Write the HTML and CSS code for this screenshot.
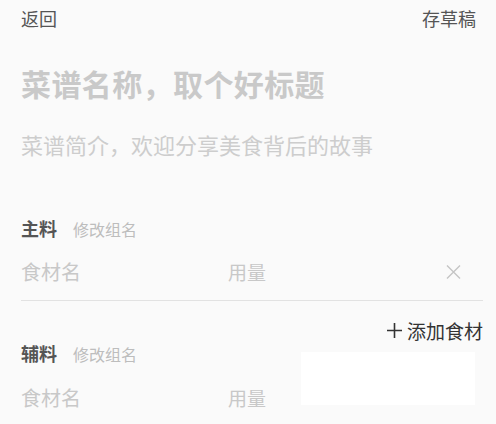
FILE: index.html
```html
<!DOCTYPE html>
<html lang="zh-CN">
<head>
  <meta charset="UTF-8" />
  <meta name="viewport" content="width=device-width, initial-scale=1.0"/>
  <title>创建菜谱</title>
  <link rel="stylesheet" href="styles.css">
</head>
<body>

  <!-- 顶部栏 -->
  <div class="topbar">
    <span>返回</span>
    <span>存草稿</span>
  </div>

  <div class="title">菜谱名称，取个好标题</div>
  <div class="intro">菜谱简介，欢迎分享美食背后的故事</div>

  <!-- 主料 -->
  <div class="group group-main">
    <div class="group-head">
      <span class="group-name">主料</span>
      <span class="group-edit">修改组名</span>
    </div>
    <div class="row row-line">
      <span class="row-name">食材名</span>
      <span class="row-amount">用量</span>
      <svg class="row-del" width="15" height="14" viewBox="0 0 15 14">
        <path d="M1 0.5 L14 13.5 M14 0.5 L1 13.5" stroke="#c4c4c4" stroke-width="1.4" fill="none"/>
      </svg>
    </div>
  </div>

  <div class="add">
    <svg class="add-plus" width="15" height="15" viewBox="0 0 15 15">
      <path d="M7.5 0 V15 M0 7.5 H15" stroke="#333" stroke-width="1.6" fill="none"/>
    </svg>
    <span>添加食材</span>
  </div>

  <!-- 辅料 -->
  <div class="group group-extra">
    <div class="group-head">
      <span class="group-name">辅料</span>
      <span class="group-edit">修改组名</span>
    </div>
    <div class="row">
      <span class="row-name">食材名</span>
      <span class="row-amount">用量</span>
    </div>
    <div class="blank"></div>
  </div>

</body>
</html>
```

FILE: styles.css
```css
body {
  margin: 0;
  padding: 9px 13px 0 21px;
  background-color: #fafafa;
  font-family: "Noto Sans CJK SC", "Noto Sans", sans-serif;
  height: 424px;
  box-sizing: border-box;
  overflow: hidden;
}
.topbar {
  display: flex;
  justify-content: space-between;
  padding-right: 7px;
  font-size: 18px;
  line-height: 18px;
  color: #555;
}
.title {
  margin-top: 41px;
  font-size: 30px;
  line-height: 30px;
  font-weight: bold;
  letter-spacing: 0.4px;
  color: #c9c9c9;
}
.intro {
  margin-top: 35px;
  font-size: 22px;
  line-height: 22px;
  color: #cdcdcd;
}
.group {
  position: relative;
}
.group-main {
  margin-top: 64px;
}
.group-extra {
  margin-top: 4px;
}
.group-head {
  display: flex;
  align-items: baseline;
  line-height: 18px;
}
.group-name {
  font-size: 18px;
  font-weight: bold;
  color: #555;
}
.group-edit {
  margin-left: 16px;
  font-size: 16px;
  color: #bdbdbd;
}
.row {
  display: flex;
  align-items: center;
  margin-top: 24px;
  font-size: 20px;
  line-height: 20px;
  color: #c8c8c8;
}
.group-extra .row {
  margin-top: 25px;
}
.row-line {
  padding-bottom: 18px;
  border-bottom: 1px solid #e2e2e2;
}
.row-name {
  width: 207px;
}
.row-amount {
  flex: 1;
  font-size: 19px;
}
.row-del {
  margin-right: 22px;
}
.add {
  display: flex;
  justify-content: flex-end;
  align-items: center;
  gap: 5px;
  margin-top: 20px;
  font-size: 19px;
  line-height: 19px;
  color: #333;
}
.blank {
  position: absolute;
  left: 280px;
  top: 8px;
  width: 174px;
  height: 53px;
  background: #fff;
}
```
